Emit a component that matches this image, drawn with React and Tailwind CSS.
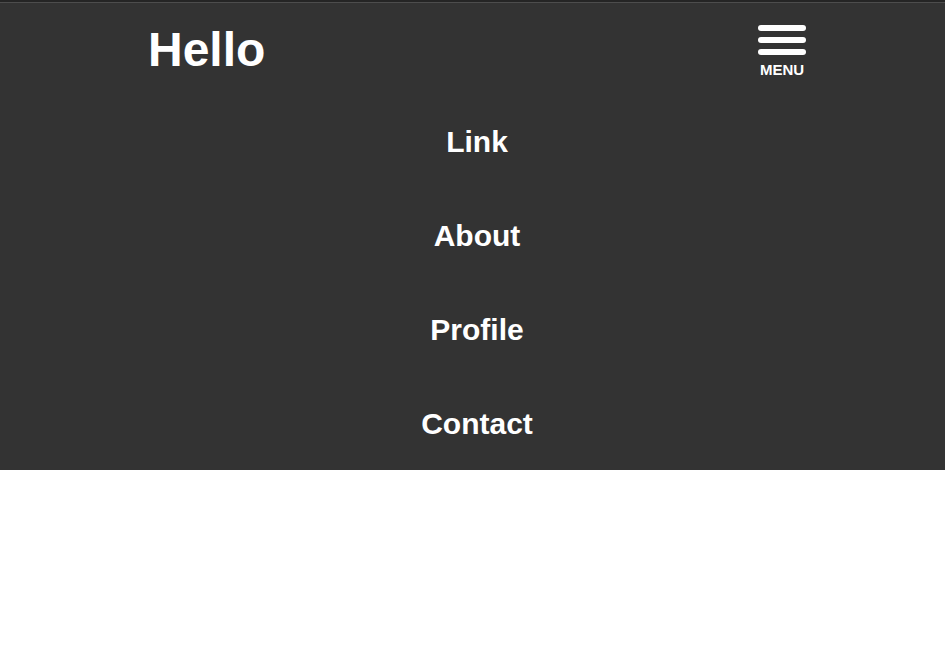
import React from 'react';

const links = ['Link', 'About', 'Profile', 'Contact'];

function Burger() {
  return (
    <button type="button" className="flex flex-col items-center mt-[22px]">
      <span className="block w-12 h-[6px] rounded-full bg-white" />
      <span className="block w-12 h-[6px] rounded-full bg-white mt-[6px]" />
      <span className="block w-12 h-[6px] rounded-full bg-white mt-[6px]" />
      <span className="block mt-[7px] text-[15px] leading-none font-bold text-white">MENU</span>
    </button>
  );
}

export default function App() {
  return (
    <div className="min-h-[666px] bg-white font-['Liberation_Sans',Arial,sans-serif]">
      <nav className="bg-[#333333] border-t-2 border-[#252525]">
        <div className="border-t border-[#4d4d4d]">
          <header className="h-[91px] flex justify-between items-start pl-[148px] pr-[139px]">
            <h1 className="mt-[23px] text-[48px] leading-none font-bold text-white">Hello</h1>
            <Burger />
          </header>
          <ul className="flex flex-col pl-[9px]">
            {links.map((l) => (
              <li key={l} className="h-[94px] flex items-center justify-center">
                <a href="#" className="text-[30px] font-bold text-white">{l}</a>
              </li>
            ))}
          </ul>
        </div>
      </nav>
    </div>
  );
}
